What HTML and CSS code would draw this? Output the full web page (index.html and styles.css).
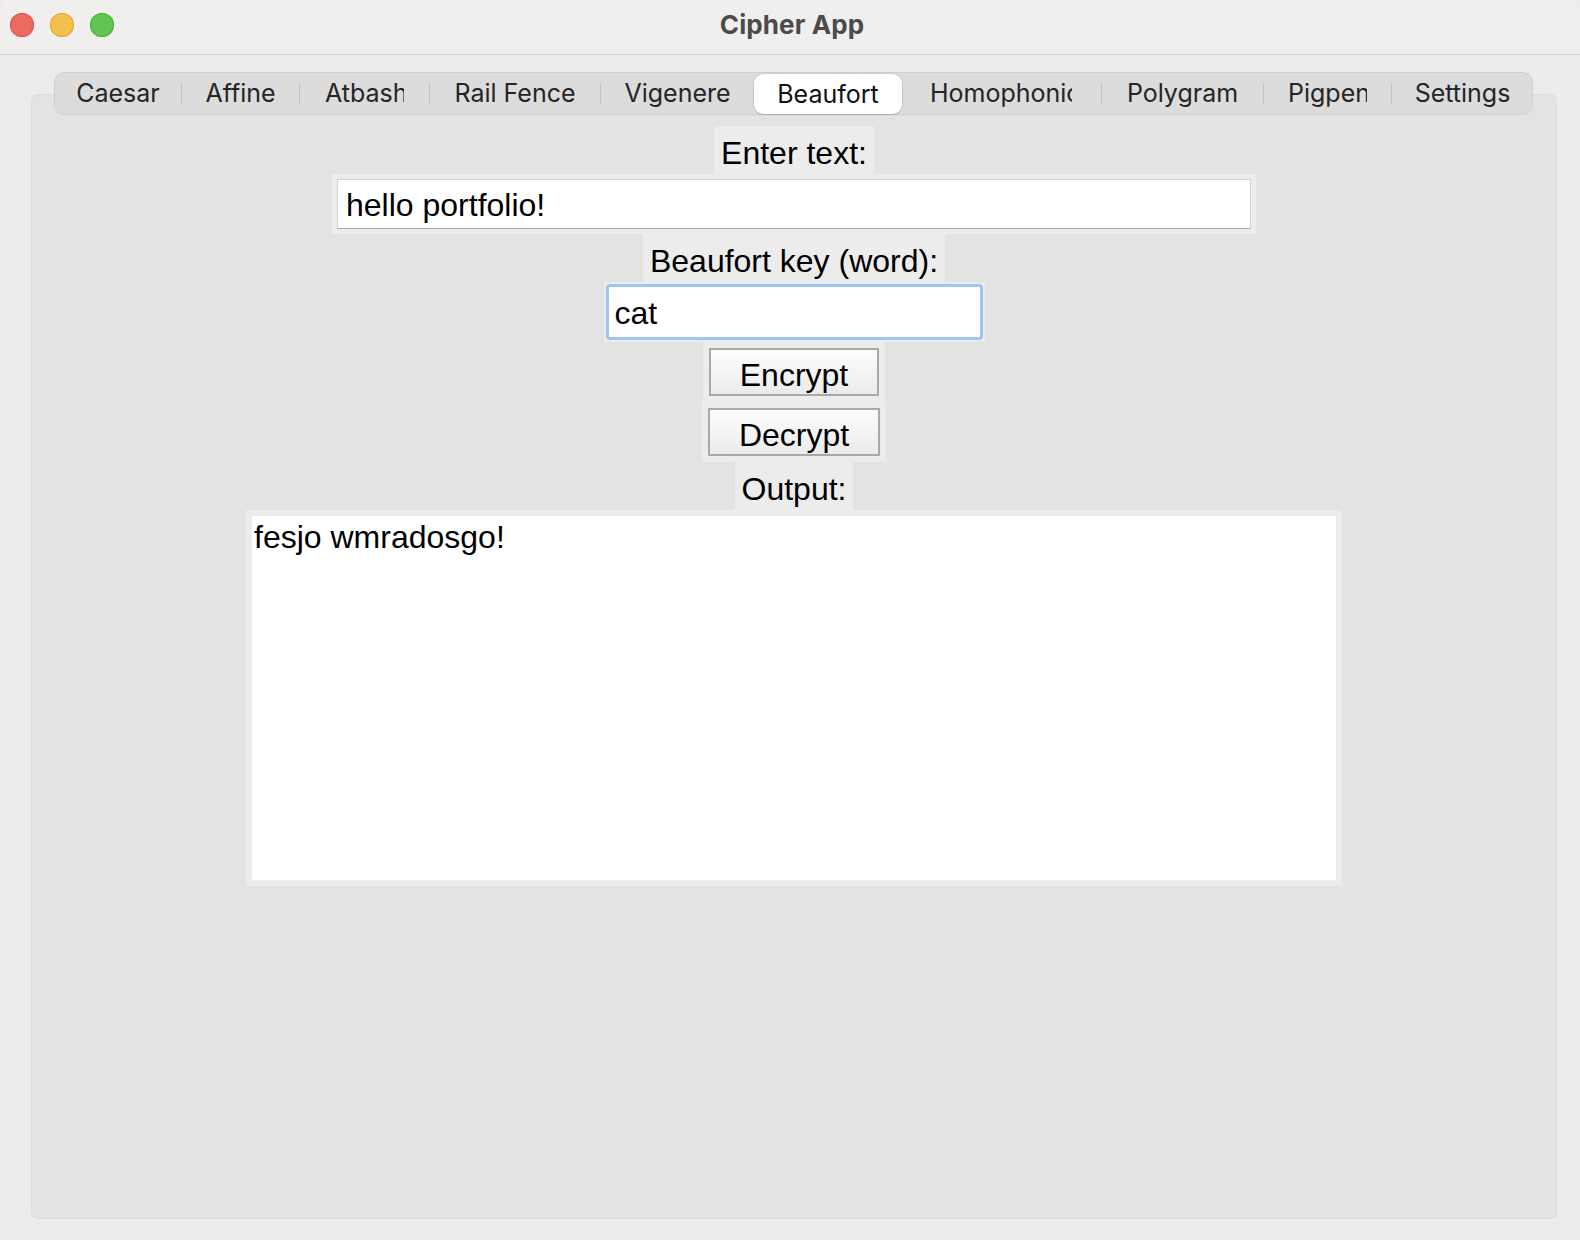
FILE: index.html
```html
<!DOCTYPE html>
<html lang="en">
<head>
<meta charset="utf-8">
<title>Cipher App</title>
<link rel="stylesheet" href="styles.css">
</head>
<body>
<div class="window">
  <header class="titlebar">
    <div class="lights">
      <span class="light red"></span>
      <span class="light yellow"></span>
      <span class="light green"></span>
    </div>
    <div class="title">Cipher App</div>
    <div class="spacer"></div>
  </header>
  <main class="body">
    <nav class="tabbar">
      <div class="tab t-caesar"><span class="tl">Caesar</span></div>
      <span class="sep"></span>
      <div class="tab t-affine"><span class="tl">Affine</span></div>
      <span class="sep"></span>
      <div class="tab t-atbash clip"><span class="tl">Atbash</span></div>
      <span class="sep"></span>
      <div class="tab t-rail"><span class="tl">Rail Fence</span></div>
      <span class="sep"></span>
      <div class="tab t-vig"><span class="tl">Vigenere</span></div>
      <div class="tab t-beau selected"><span class="tl">Beaufort</span></div>
      <div class="tab t-homo clip"><span class="tl">Homophonic</span></div>
      <span class="sep"></span>
      <div class="tab t-poly"><span class="tl">Polygram</span></div>
      <span class="sep"></span>
      <div class="tab t-pig clip"><span class="tl">Pigpen</span></div>
      <span class="sep"></span>
      <div class="tab t-set"><span class="tl">Settings</span></div>
    </nav>
    <section class="panel">
      <div class="label">Enter text:</div>
      <div class="frame frame-text">
        <div class="field">hello portfolio!</div>
      </div>
      <div class="label">Beaufort key (word):</div>
      <div class="frame frame-key">
        <div class="field focused">cat</div>
      </div>
      <div class="frame frame-btn">
        <div class="button">Encrypt</div>
      </div>
      <div class="frame frame-btn">
        <div class="button">Decrypt</div>
      </div>
      <div class="label">Output:</div>
      <div class="frame frame-out">
        <div class="output">fesjo wmradosgo!</div>
      </div>
    </section>
  </main>
</div>
</body>
</html>
```

FILE: styles.css
```css
* {
  box-sizing: border-box;
}

html, body {
  margin: 0;
  padding: 0;
}

body {
  width: 1580px;
  height: 1240px;
  overflow: hidden;
  background: #ececec;
}

.window {
  width: 1580px;
  height: 1240px;
  display: flex;
  flex-direction: column;
  background: #ececec;
  border-top-left-radius: 10px;
  border-top-right-radius: 10px;
  overflow: hidden;
}

/* ---------- title bar ---------- */
.titlebar {
  height: 55px;
  flex: none;
  background: #f0efee;
  border-bottom: 1px solid #d3d3d3;
  display: grid;
  grid-template-columns: 1fr auto 1fr;
  align-items: start;
}

.lights {
  display: flex;
  gap: 16px;
  padding: 13px 0 0 10px;
}

.light {
  width: 24px;
  height: 24px;
  border-radius: 50%;
  display: block;
}

.light.red {
  background: #ed6a5e;
  box-shadow: inset 0 0 0 1px #d9574b;
}

.light.yellow {
  background: #f5bf4f;
  box-shadow: inset 0 0 0 1px #dea63a;
}

.light.green {
  background: #61c554;
  box-shadow: inset 0 0 0 1px #4dac41;
}

.title {
  font-family: Inter, "Liberation Sans", sans-serif;
  font-weight: 700;
  font-size: 26px;
  line-height: 30px;
  color: #4b4b4b;
  padding-top: 10px;
  padding-left: 4px;
  letter-spacing: 0.1px;
}

/* ---------- body ---------- */
.body {
  flex: 1;
  display: flex;
  flex-direction: column;
  padding: 17px 23px 21px 31px;
  min-height: 0;
}

.tabbar {
  position: relative;
  z-index: 1;
  flex: none;
  height: 43px;
  margin: 0 24px 0 23px;
  display: flex;
  align-items: center;
  background: #dcdcdc;
  border: 1px solid #cfcfcf;
  border-radius: 10px;
  font-family: Inter, "Liberation Sans", sans-serif;
  font-size: 25px;
  color: #252525;
}

.tab {
  height: 100%;
  display: flex;
  align-items: center;
  justify-content: center;
  flex: none;
  white-space: nowrap;
  padding-bottom: 1px;
}

.tab .tl {
  display: block;
  white-space: nowrap;
  overflow: hidden;
}

.tab.clip {
  justify-content: flex-start;
}

.sep {
  flex: none;
  width: 1px;
  height: 22px;
  background: #c4c4c4;
}

.t-caesar { width: 126px; }
.t-affine { width: 117px; }
.t-atbash { width: 129px; padding-left: 25px; }
.t-atbash .tl { width: 79px; }
.t-rail { width: 170px; }
.t-vig { width: 153px; }
.t-beau { width: 148px; }
.t-homo { width: 199px; padding-left: 28px; }
.t-homo .tl { width: 142px; }
.t-poly { width: 161px; }
.t-pig { width: 127px; padding-left: 24px; }
.t-pig .tl { width: 79px; }
.t-set { width: 141px; }

.tab.selected {
  height: 40px;
  margin-top: 1px;
  padding-bottom: 0;
  background: #ffffff;
  border-radius: 9px;
  box-shadow: 0 0 0 0.5px rgba(0, 0, 0, 0.12), 0 1px 2px rgba(0, 0, 0, 0.12);
  color: #111111;
}

/* ---------- panel ---------- */
.panel {
  flex: 1;
  margin-top: -21px;
  background: #e3e3e3;
  border-radius: 7px;
  box-shadow: inset 0 0 0 1px #dddddd;
  padding-top: 32px;
  display: flex;
  flex-direction: column;
  align-items: center;
  font-family: "Liberation Sans", Arial, sans-serif;
  font-size: 32px;
  color: #000000;
}

.label {
  height: 48px;
  padding: 6px 7px 0;
  line-height: 42px;
  background: #ececec;
  white-space: nowrap;
}

.frame {
  background: #ececec;
  height: 60px;
}

.frame-text {
  width: 924px;
  padding: 5px 5px 5px 5px;
}

.field {
  height: 50px;
  background: #ffffff;
  border: 1px solid #d2d2d2;
  border-bottom-color: #a9a9a9;
  padding: 2px 0 0 8px;
  line-height: 46px;
  white-space: nowrap;
}

.frame-key {
  width: 381px;
  padding: 2px;
}

.field.focused {
  height: 56px;
  border: 3px solid #a2c4f0;
  border-radius: 4px;
  padding: 2px 0 0 6px;
  line-height: 48px;
}

.frame-btn {
  padding: 6px;
}

.button {
  height: 48px;
  border: 2px solid #a9a9a9;
  background: linear-gradient(#fdfdfd, #ebebeb);
  padding: 6px 29px 0;
  line-height: 38px;
  text-align: center;
  white-space: nowrap;
}

.frame-out {
  width: 1096px;
  height: 376px;
  padding: 6px;
}

.output {
  height: 100%;
  background: #ffffff;
  padding: 3px 2px 0;
  line-height: 36px;
}
```
